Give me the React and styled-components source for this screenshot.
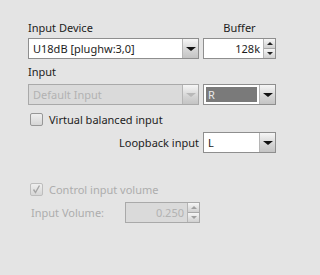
import React from "react";
import styled, { createGlobalStyle, css } from "styled-components";

const Global = createGlobalStyle`
  html, body { margin: 0; padding: 0; background: #e4e4e4; }
  body { font-family: "Noto Sans", "DejaVu Sans", sans-serif; font-size: 11px; color: #1c1c1c; }
`;

const Page = styled.div`
  width: 294px;
  height: 275px;
  box-sizing: border-box;
  padding: 21px 18px 0 28px;
  display: grid;
  grid-template-columns: 171px 73px;
  column-gap: 4px;
  grid-auto-rows: auto;
  align-content: start;
`;

const Label = styled.div`
  height: ${(p) => p.$h || 14}px;
  line-height: ${(p) => p.$h || 14}px;
  margin-bottom: ${(p) => p.$mb || 0}px;
  margin-top: ${(p) => p.$mt || 0}px;
  text-align: ${(p) => p.$align || "left"};
  color: ${(p) => (p.$disabled ? "#adadad" : "#1c1c1c")};
  white-space: nowrap;
`;

const Box = styled.div`
  height: 21px;
  box-sizing: border-box;
  border: 1px solid #8e8e8e;
  display: flex;
  background: ${(p) => (p.$disabled ? "#dadada" : "#ffffff")};
  ${(p) => p.$disabled && css`border-color: #a9a9a9;`}
`;

const Field = styled.div`
  flex: 1;
  min-width: 0;
  display: flex;
  align-items: center;
  justify-content: ${(p) => (p.$right ? "flex-end" : "flex-start")};
  padding: 0 ${(p) => (p.$right ? 3 : 4)}px;
  white-space: nowrap;
  overflow: hidden;
  color: ${(p) => (p.$disabled ? "#b2b2b2" : "#1c1c1c")};
  ${(p) =>
    p.$selected &&
    css`
      margin: 1px;
      border: 1px solid #ffffff;
      background: #7a7a7a;
      color: #e8e8e8;
      padding-left: 2px;
    `}
`;

const ArrowButton = styled.div`
  width: 15px;
  border-left: 1px solid #b5b5b5;
  background: linear-gradient(#f6f6f6, #d4d4d4 60%, #c4c4c4);
  display: flex;
  align-items: center;
  justify-content: center;
`;

const Tri = styled.div`
  width: 0;
  height: 0;
  border-left: ${(p) => p.$s}px solid transparent;
  border-right: ${(p) => p.$s}px solid transparent;
  ${(p) =>
    p.$up
      ? css`border-bottom: ${p.$h}px solid ${p.$c};`
      : css`border-top: ${p.$h}px solid ${p.$c};`}
`;

const SpinButtons = styled.div`
  width: 11px;
  border-left: 1px solid #b5b5b5;
  display: flex;
  flex-direction: column;
`;

const SpinHalf = styled.div`
  flex: 1;
  display: flex;
  align-items: center;
  justify-content: center;
  background: linear-gradient(#f6f6f6, #d0d0d0);
  & + & { border-top: 1px solid #a8a8a8; }
`;

const Combo = ({ text, disabled, selected }) => (
  <Box $disabled={disabled}>
    <Field $disabled={disabled} $selected={selected}>{text}</Field>
    <ArrowButton>
      <Tri $s={5} $h={4} $c={disabled ? "#b8b8b8" : "#111"} />
    </ArrowButton>
  </Box>
);

const Spin = ({ text, disabled }) => (
  <Box $disabled={disabled}>
    <Field $right $disabled={disabled}>{text}</Field>
    <SpinButtons>
      <SpinHalf>
        <Tri $up $s={3} $h={3} $c={disabled ? "#a0a0a0" : "#222"} />
      </SpinHalf>
      <SpinHalf>
        <Tri $s={3} $h={3} $c={disabled ? "#a0a0a0" : "#222"} />
      </SpinHalf>
    </SpinButtons>
  </Box>
);

const CheckRow = styled.div`
  grid-column: 1 / span 2;
  display: flex;
  align-items: center;
  gap: 6px;
  padding-left: 2px;
  height: 15px;
  margin-top: ${(p) => p.$mt || 0}px;
  color: ${(p) => (p.$disabled ? "#adadad" : "#1c1c1c")};
`;

const CheckBox = styled.div`
  width: 13px;
  height: 13px;
  box-sizing: border-box;
  border: 1px solid ${(p) => (p.$disabled ? "#bdbdbd" : "#979797")};
  border-radius: 2px;
  background: linear-gradient(#efefef, #d6d6d6);
  display: flex;
  align-items: center;
  justify-content: center;
`;

const Row = styled.div`
  display: flex;
  align-items: center;
  justify-content: ${(p) => p.$justify || "flex-start"};
  gap: ${(p) => p.$gap || 0}px;
  margin-top: ${(p) => p.$mt || 0}px;
`;

const VolumeRow = styled.div`
  grid-column: 1 / span 2;
  display: grid;
  grid-template-columns: 94px 75px;
  align-items: center;
  margin-top: 5px;
  padding-left: 3px;
`;

export default function App() {
  return (
    <>
      <Global />
      <Page>
        <Label $mb={3}>Input Device</Label>
        <Label $mb={3} $align="center">Buffer</Label>
        <Combo text="U18dB [plughw:3,0]" />
        <Spin text="128k" />
        <Label $mt={6} $mb={5}>Input</Label>
        <div />
        <Combo text="Default Input" disabled />
        <Combo text="R" selected />
        <CheckRow $mt={7}>
          <CheckBox />
          <span>Virtual balanced input</span>
        </CheckRow>
        <Row $justify="flex-end" $mt={5}>
          <Label>Loopback input</Label>
        </Row>
        <Row $mt={5}>
          <div style={{ flex: 1 }}>
            <Combo text="L" />
          </div>
        </Row>
        <CheckRow $mt={29} $disabled>
          <CheckBox $disabled>
            <svg width="11" height="11" viewBox="0 0 11 11">
              <path d="M2.5 5.5 L4.5 8.5 L8.5 1.5" fill="none" stroke="#a5a5a5" strokeWidth="1.4" />
            </svg>
          </CheckBox>
          <span>Control input volume</span>
        </CheckRow>
        <VolumeRow>
          <Label $disabled>Input Volume:</Label>
          <Spin text="0.250" disabled />
        </VolumeRow>
      </Page>
    </>
  );
}
